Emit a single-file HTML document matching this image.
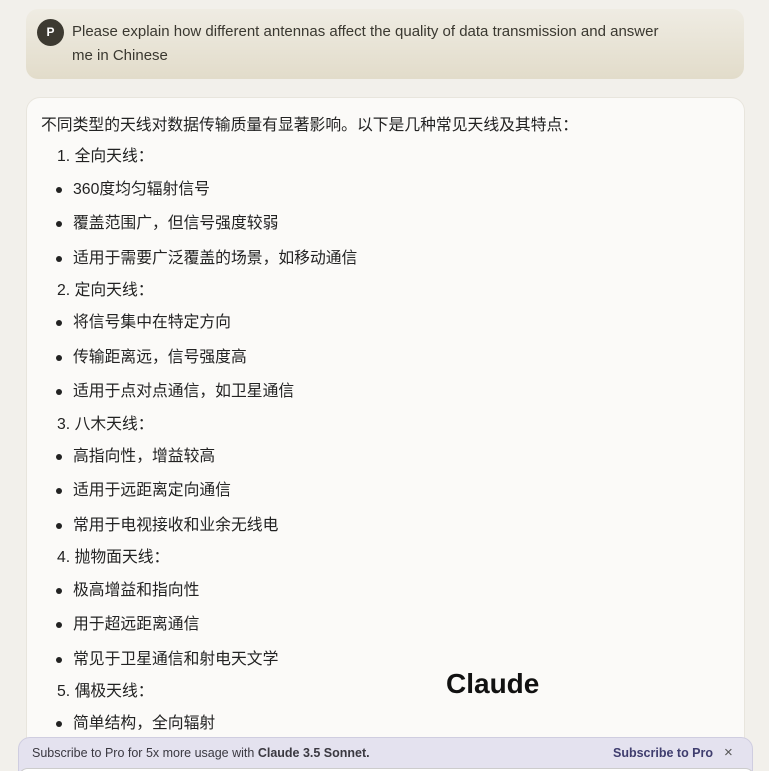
<!DOCTYPE html>
<html><head><meta charset="utf-8"><style>
html,body{margin:0;width:769px;height:771px;overflow:hidden}
body{background:#f2f0eb;font-family:"Liberation Sans","Noto Sans CJK SC",sans-serif;position:relative}
.prompt{position:absolute;left:26px;top:9px;width:718px;height:70px;border-radius:12px;background:linear-gradient(#efece3,#e2dcca)}
.av{position:absolute;left:11px;top:10px;width:27px;height:27px;border-radius:50%;background:#3d3a31;color:#fff;font-weight:bold;font-size:12px;text-align:center;line-height:27px}
.pt{position:absolute;left:46px;top:11px;width:660px;font-size:15px;line-height:24px;color:#3a3830;white-space:nowrap}
.card{position:absolute;left:26px;top:97px;width:717px;height:700px;border-radius:14px;background:#fbfaf8;border:1px solid #e8e5dd}
.l{position:absolute;font-size:15.8px;color:#222;white-space:nowrap;line-height:20px}
.b{left:73px}.b:before{content:"";position:absolute;left:-17px;top:7px;width:6px;height:6px;border-radius:50%;background:#222}
.n{left:57px}
.bar{position:absolute;left:18px;top:737px;width:733px;height:40px;border-radius:12px 12px 0 0;background:#e4e2ef;border:1px solid #cfcde0}
.inp{position:absolute;left:18px;top:768px;width:735px;height:10px;background:#fff;border:1px solid #ccc;border-radius:10px 10px 0 0}
</style></head><body>
<div class="prompt"><div class="av">P</div><div class="pt">Please explain how different antennas affect the quality of data transmission and answer<br>me in Chinese</div></div>
<div class="card"></div>
<div class="l" style="left:41px;top:116px">不同类型的天线对数据传输质量有显著影响。以下是几种常见天线及其特点：</div>
<div class="l n" style="top:147px">1. 全向天线：</div>
<div class="l b" style="top:180px">360度均匀辐射信号</div>
<div class="l b" style="top:214px">覆盖范围广，但信号强度较弱</div>
<div class="l b" style="top:249px">适用于需要广泛覆盖的场景，如移动通信</div>
<div class="l n" style="top:281px">2. 定向天线：</div>
<div class="l b" style="top:313px">将信号集中在特定方向</div>
<div class="l b" style="top:348px">传输距离远，信号强度高</div>
<div class="l b" style="top:382px">适用于点对点通信，如卫星通信</div>
<div class="l n" style="top:415px">3. 八木天线：</div>
<div class="l b" style="top:447px">高指向性，增益较高</div>
<div class="l b" style="top:481px">适用于远距离定向通信</div>
<div class="l b" style="top:516px">常用于电视接收和业余无线电</div>
<div class="l n" style="top:548px">4. 抛物面天线：</div>
<div class="l b" style="top:581px">极高增益和指向性</div>
<div class="l b" style="top:615px">用于超远距离通信</div>
<div class="l b" style="top:650px">常见于卫星通信和射电天文学</div>
<div class="l n" style="top:682px">5. 偶极天线：</div>
<div class="l b" style="top:714px">简单结构，全向辐射</div>
<div style="position:absolute;left:446px;top:668px;font-size:28px;font-weight:bold;color:#111">Claude</div>
<div class="bar"></div>
<div style="position:absolute;left:32px;top:746px;font-size:12.5px;color:#3a3840">Subscribe to Pro for 5x more usage with <b>Claude 3.5 Sonnet.</b></div>
<div style="position:absolute;left:613px;top:746px;font-size:12.5px;font-weight:bold;color:#3f3d6e">Subscribe to Pro</div>
<div style="position:absolute;left:724px;top:744px;font-size:15px;color:#555">×</div>
<div class="inp"></div>
</body></html>
